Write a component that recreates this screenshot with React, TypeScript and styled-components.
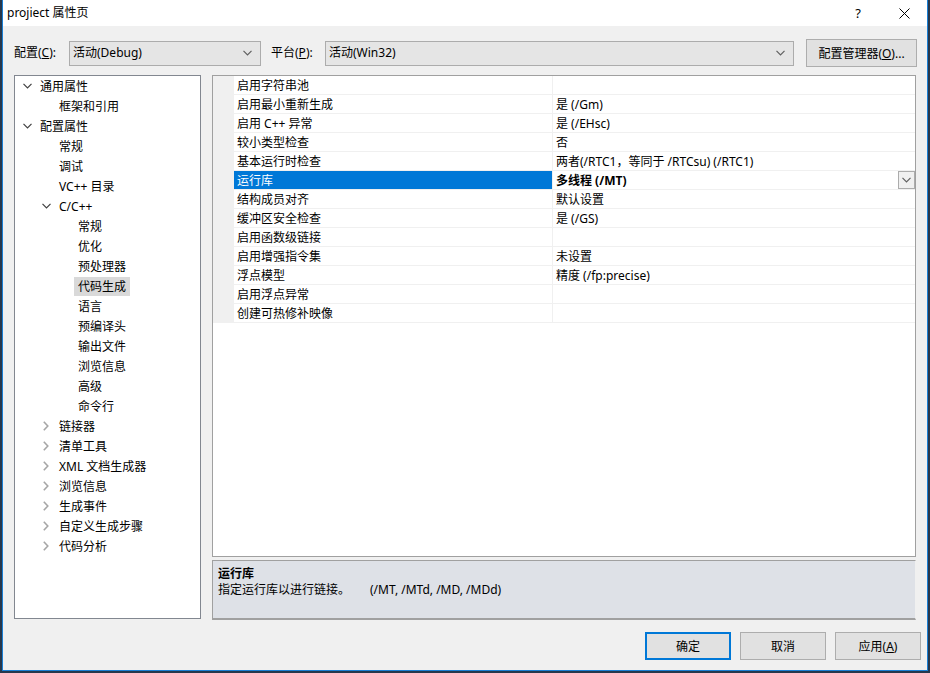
import styled, { createGlobalStyle } from 'styled-components'

const GlobalStyle = createGlobalStyle`
	html, body {
		margin: 0;
		padding: 0;
		background: #26384d;
	}
	body {
		font-family: "Noto Sans", "Noto Sans CJK SC", sans-serif;
		font-size: 12px;
		color: #000;
	}
	* {
		box-sizing: border-box;
	}
`

type TreeItem = {
	label: string
	level: number
	arrow?: 'open' | 'closed'
	selected?: boolean
}

const treeItems: TreeItem[] = [
	{ label: '通用属性', level: 0, arrow: 'open' },
	{ label: '框架和引用', level: 1 },
	{ label: '配置属性', level: 0, arrow: 'open' },
	{ label: '常规', level: 1 },
	{ label: '调试', level: 1 },
	{ label: 'VC++ 目录', level: 1 },
	{ label: 'C/C++', level: 1, arrow: 'open' },
	{ label: '常规', level: 2 },
	{ label: '优化', level: 2 },
	{ label: '预处理器', level: 2 },
	{ label: '代码生成', level: 2, selected: true },
	{ label: '语言', level: 2 },
	{ label: '预编译头', level: 2 },
	{ label: '输出文件', level: 2 },
	{ label: '浏览信息', level: 2 },
	{ label: '高级', level: 2 },
	{ label: '命令行', level: 2 },
	{ label: '链接器', level: 1, arrow: 'closed' },
	{ label: '清单工具', level: 1, arrow: 'closed' },
	{ label: 'XML 文档生成器', level: 1, arrow: 'closed' },
	{ label: '浏览信息', level: 1, arrow: 'closed' },
	{ label: '生成事件', level: 1, arrow: 'closed' },
	{ label: '自定义生成步骤', level: 1, arrow: 'closed' },
	{ label: '代码分析', level: 1, arrow: 'closed' },
]

const properties: [string, string][] = [
	['启用字符串池', ''],
	['启用最小重新生成', '是 (/Gm)'],
	['启用 C++ 异常', '是 (/EHsc)'],
	['较小类型检查', '否'],
	['基本运行时检查', '两者(/RTC1，等同于 /RTCsu) (/RTC1)'],
	['运行库', '多线程 (/MT)'],
	['结构成员对齐', '默认设置'],
	['缓冲区安全检查', '是 (/GS)'],
	['启用函数级链接', ''],
	['启用增强指令集', '未设置'],
	['浮点模型', '精度 (/fp:precise)'],
	['启用浮点异常', ''],
	['创建可热修补映像', ''],
]

const SELECTED_ROW = 5

const ChevronDown = ({ color = '#404040' }: { color?: string }) => (
	<svg width="9" height="6" viewBox="0 0 9 6">
		<polyline points="0.5,0.8 4.5,4.8 8.5,0.8" fill="none" stroke={color} strokeWidth="1.2" />
	</svg>
)

const ChevronRight = () => (
	<svg width="6" height="10" viewBox="0 0 6 10">
		<polyline points="0.8,0.8 4.8,5 0.8,9.2" fill="none" stroke="#a6a6a6" strokeWidth="1.6" />
	</svg>
)

const CloseIcon = () => (
	<svg width="11" height="11" viewBox="0 0 11 11">
		<line x1="0.5" y1="0.5" x2="10.5" y2="10.5" stroke="#000" strokeWidth="1" />
		<line x1="10.5" y1="0.5" x2="0.5" y2="10.5" stroke="#000" strokeWidth="1" />
	</svg>
)

const App = () => {
	return (
		<>
			<GlobalStyle />
			<Window>
				<TitleBar>
					<Title>projiect 属性页</Title>
					<TitleButton>?</TitleButton>
					<TitleButton>
						<CloseIcon />
					</TitleButton>
				</TitleBar>

				<ConfigRow>
					<FieldLabel $width={55}>
						配置(<u>C</u>):
					</FieldLabel>
					<Combo $width={192}>
						<span>活动(Debug)</span>
						<ChevronDown color="#606060" />
					</Combo>
					<FieldLabel $width={54} style={{ marginLeft: 10 }}>
						平台(<u>P</u>):
					</FieldLabel>
					<Combo $width={469}>
						<span>活动(Win32)</span>
						<ChevronDown color="#606060" />
					</Combo>
					<ManagerButton>
						配置管理器(<u>O</u>)...
					</ManagerButton>
				</ConfigRow>

				<Main>
					<Tree>
						{treeItems.map((item, i) => (
							<TreeRow key={i} $level={item.level}>
								<Arrow>
									{item.arrow === 'open' && <ChevronDown />}
									{item.arrow === 'closed' && <ChevronRight />}
								</Arrow>
								<TreeLabel $selected={item.selected}>{item.label}</TreeLabel>
							</TreeRow>
						))}
					</Tree>

					<RightColumn>
						<Grid>
							{properties.map(([name, value], i) => (
								<PropRow key={i}>
									<Gutter />
									<NameCell $selected={i === SELECTED_ROW}>{name}</NameCell>
									<ValueCell $bold={i === SELECTED_ROW}>
										<CellText>{value}</CellText>
										{i === SELECTED_ROW && (
											<DropButton>
												<ChevronDown color="#606060" />
											</DropButton>
										)}
									</ValueCell>
								</PropRow>
							))}
						</Grid>
						<Description>
							<DescTitle>运行库</DescTitle>
							<DescText>
								指定运行库以进行链接。
								<Switches>(/MT, /MTd, /MD, /MDd)</Switches>
							</DescText>
						</Description>
					</RightColumn>
				</Main>

				<ButtonRow>
					<DialogButton $primary>确定</DialogButton>
					<DialogButton>取消</DialogButton>
					<DialogButton>
						应用(<u>A</u>)
					</DialogButton>
				</ButtonRow>
			</Window>
		</>
	)
}

const Window = styled.div`
	display: flex;
	flex-direction: column;
	width: 926px;
	height: 671px;
	margin-left: 2px;
	padding-bottom: 10px;
	background: #f0f0f0;
	border: 1px solid #1a7fd4;
	border-top: none;
`

const TitleBar = styled.div`
	display: flex;
	align-items: center;
	height: 26px;
	padding-left: 4px;
	background: #fff;
`

const Title = styled.div`
	flex: 1;
	font-size: 12px;
	line-height: 16px;
	padding-bottom: 1px;
`

const TitleButton = styled.div`
	display: flex;
	align-items: center;
	justify-content: center;
	width: 46px;
	height: 26px;
	font-size: 13px;
`

const ConfigRow = styled.div`
	display: flex;
	align-items: center;
	height: 28px;
	margin-top: 13px;
	padding: 0 10px 0 11px;
`

const FieldLabel = styled.div<{ $width: number }>`
	width: ${(p) => p.$width}px;
	line-height: 16px;
`

const Combo = styled.div<{ $width: number }>`
	display: flex;
	align-items: center;
	justify-content: space-between;
	width: ${(p) => p.$width}px;
	height: 25px;
	padding: 0 8px 0 3px;
	background: #e5e5e5;
	border: 1px solid #acacac;
	line-height: 16px;
`

const ManagerButton = styled.div`
	display: flex;
	align-items: center;
	justify-content: center;
	width: 111px;
	height: 28px;
	margin-left: auto;
	background: #e1e1e1;
	border: 1px solid #adadad;
`

const Main = styled.div`
	display: flex;
	gap: 11px;
	height: 545px;
	margin-top: 8px;
	padding: 0 10px 0 11px;
`

const Tree = styled.div`
	width: 187px;
	height: 544px;
	background: #fff;
	border: 1px solid #828790;
`

const TreeRow = styled.div<{ $level: number }>`
	display: flex;
	align-items: center;
	height: 20px;
	padding-left: ${(p) => 4 + p.$level * 19}px;
	white-space: nowrap;
`

const Arrow = styled.div`
	display: flex;
	align-items: center;
	justify-content: center;
	width: 16px;
	height: 20px;
	margin-right: 5px;
`

const TreeLabel = styled.span<{ $selected?: boolean }>`
	line-height: 19px;
	padding: 0 4px;
	margin-left: -4px;
	background: ${(p) => (p.$selected ? '#d9d9d9' : 'transparent')};
`

const RightColumn = styled.div`
	display: flex;
	flex-direction: column;
	width: 704px;
`

const Grid = styled.div`
	height: 482px;
	background: #fff;
	border: 1px solid #a0a0a0;
`

const PropRow = styled.div`
	display: grid;
	grid-template-columns: 21px 319px 1fr;
	height: 19px;
	border-bottom: 1px solid #f0f0f0;
`

const Gutter = styled.div`
	background: #f0f0f0;
`

const NameCell = styled.div<{ $selected?: boolean }>`
	padding: 2px 0 0 3px;
	line-height: 16px;
	white-space: nowrap;
	border-right: 1px solid #f0f0f0;
	background: ${(p) => (p.$selected ? '#0078d7' : '#fff')};
	color: ${(p) => (p.$selected ? '#fff' : '#000')};
`

const ValueCell = styled.div<{ $bold?: boolean }>`
	display: flex;
	align-items: flex-start;
	padding-left: 3px;
	white-space: nowrap;
	font-weight: ${(p) => (p.$bold ? 700 : 400)};
`

const CellText = styled.span`
	padding-top: 2px;
	line-height: 16px;
`

const DropButton = styled.div`
	display: flex;
	align-items: center;
	justify-content: center;
	width: 17px;
	height: 18px;
	margin-left: auto;
	background: #f0f0f0;
	border: 1px solid #acacac;
`

const Description = styled.div`
	height: 60px;
	margin-top: 3px;
	padding: 5px 5px 4px;
	background: #dee1e7;
	border: 1px solid #a0a0a0;
	border-bottom-width: 2px;
	border-right-color: #f0f0f0;
`

const DescTitle = styled.div`
	font-weight: 700;
	line-height: 16px;
`

const DescText = styled.div`
	line-height: 16px;
	white-space: nowrap;
`

const Switches = styled.span`
	margin-left: 20px;
`

const ButtonRow = styled.div`
	display: flex;
	justify-content: flex-end;
	gap: 9px;
	margin-top: 12px;
	padding-right: 6px;
`

const DialogButton = styled.div<{ $primary?: boolean }>`
	display: flex;
	align-items: center;
	justify-content: center;
	width: 86px;
	height: 28px;
	background: #e1e1e1;
	border: ${(p) => (p.$primary ? '2px solid #0078d7' : '1px solid #adadad')};
`

export default App
